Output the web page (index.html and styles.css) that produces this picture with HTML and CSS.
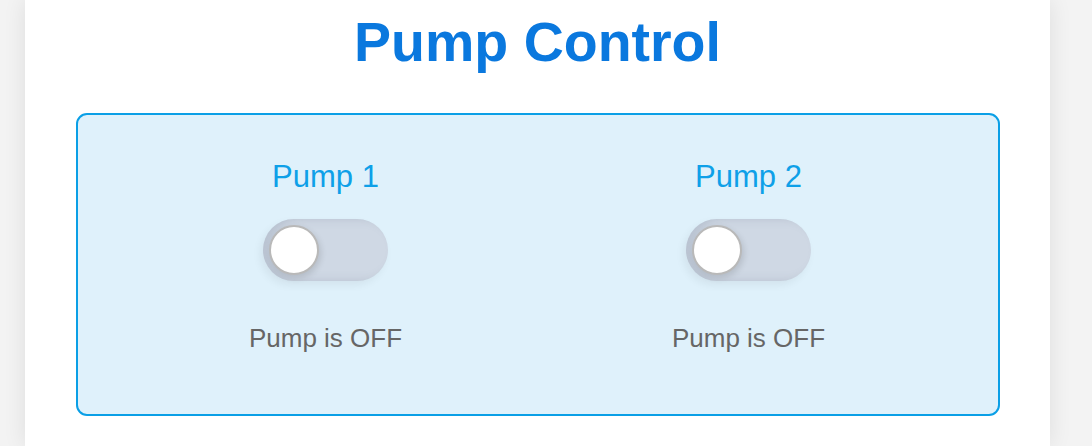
FILE: index.html
```html
<!DOCTYPE html>
<html>
<head>
<meta charset="utf-8">
<link rel="stylesheet" href="styles.css">
</head>
<body>
<div class="card">
  <h1 class="title">Pump Control</h1>
  <div class="panel">
    <div class="pump">
      <div class="pump-name">Pump 1</div>
      <div class="toggle"><div class="knob"></div></div>
      <div class="status">Pump is OFF</div>
    </div>
    <div class="pump">
      <div class="pump-name">Pump 2</div>
      <div class="toggle"><div class="knob"></div></div>
      <div class="status">Pump is OFF</div>
    </div>
  </div>
</div>
</body>
</html>
```
FILE: styles.css
```css
html, body {
  margin: 0;
  padding: 0;
}
body {
  background: #f3f3f3;
  font-family: "Liberation Sans", Arial, sans-serif;
  height: 446px;
  overflow: hidden;
}
.card {
  margin-left: 25px;
  width: 1025px;
  min-height: 446px;
  background: #ffffff;
  box-shadow: 0 0 22px rgba(0, 0, 0, 0.09);
  padding-top: 11px;
  box-sizing: border-box;
}
.title {
  margin: 0 0 39px;
  text-align: center;
  font-size: 55.5px;
  font-weight: bold;
  color: #0a78de;
  line-height: 63px;
}
.panel {
  margin: 0 50px 0 51px;
  height: 303px;
  box-sizing: border-box;
  border: 2px solid #0a9fe6;
  border-radius: 11px;
  background: #dff1fb;
  display: flex;
  justify-content: center;
  gap: 123px;
  padding-top: 46px;
  padding-right: 2px;
}
.pump {
  width: 300px;
  display: flex;
  flex-direction: column;
  align-items: center;
}
.pump-name {
  font-size: 31px;
  line-height: 32px;
  color: #0ea0e8;
}
.toggle {
  margin-top: 26px;
  width: 125px;
  height: 62px;
  border-radius: 31px;
  background: #cfd8e4;
  box-shadow: inset 8px 0 10px rgba(120, 130, 150, 0.25), -3px 4px 8px rgba(0, 0, 0, 0.06);
  display: flex;
  align-items: center;
  padding-left: 6px;
  box-sizing: border-box;
}
.knob {
  width: 50px;
  height: 50px;
  border-radius: 50%;
  background: #ffffff;
  border: 2px solid #b9b9b9;
  box-sizing: border-box;
  box-shadow: 2px 3px 6px rgba(0, 0, 0, 0.12);
}
.status {
  margin-top: 43px;
  font-size: 26px;
  line-height: 28px;
  color: #666666;
}
```
